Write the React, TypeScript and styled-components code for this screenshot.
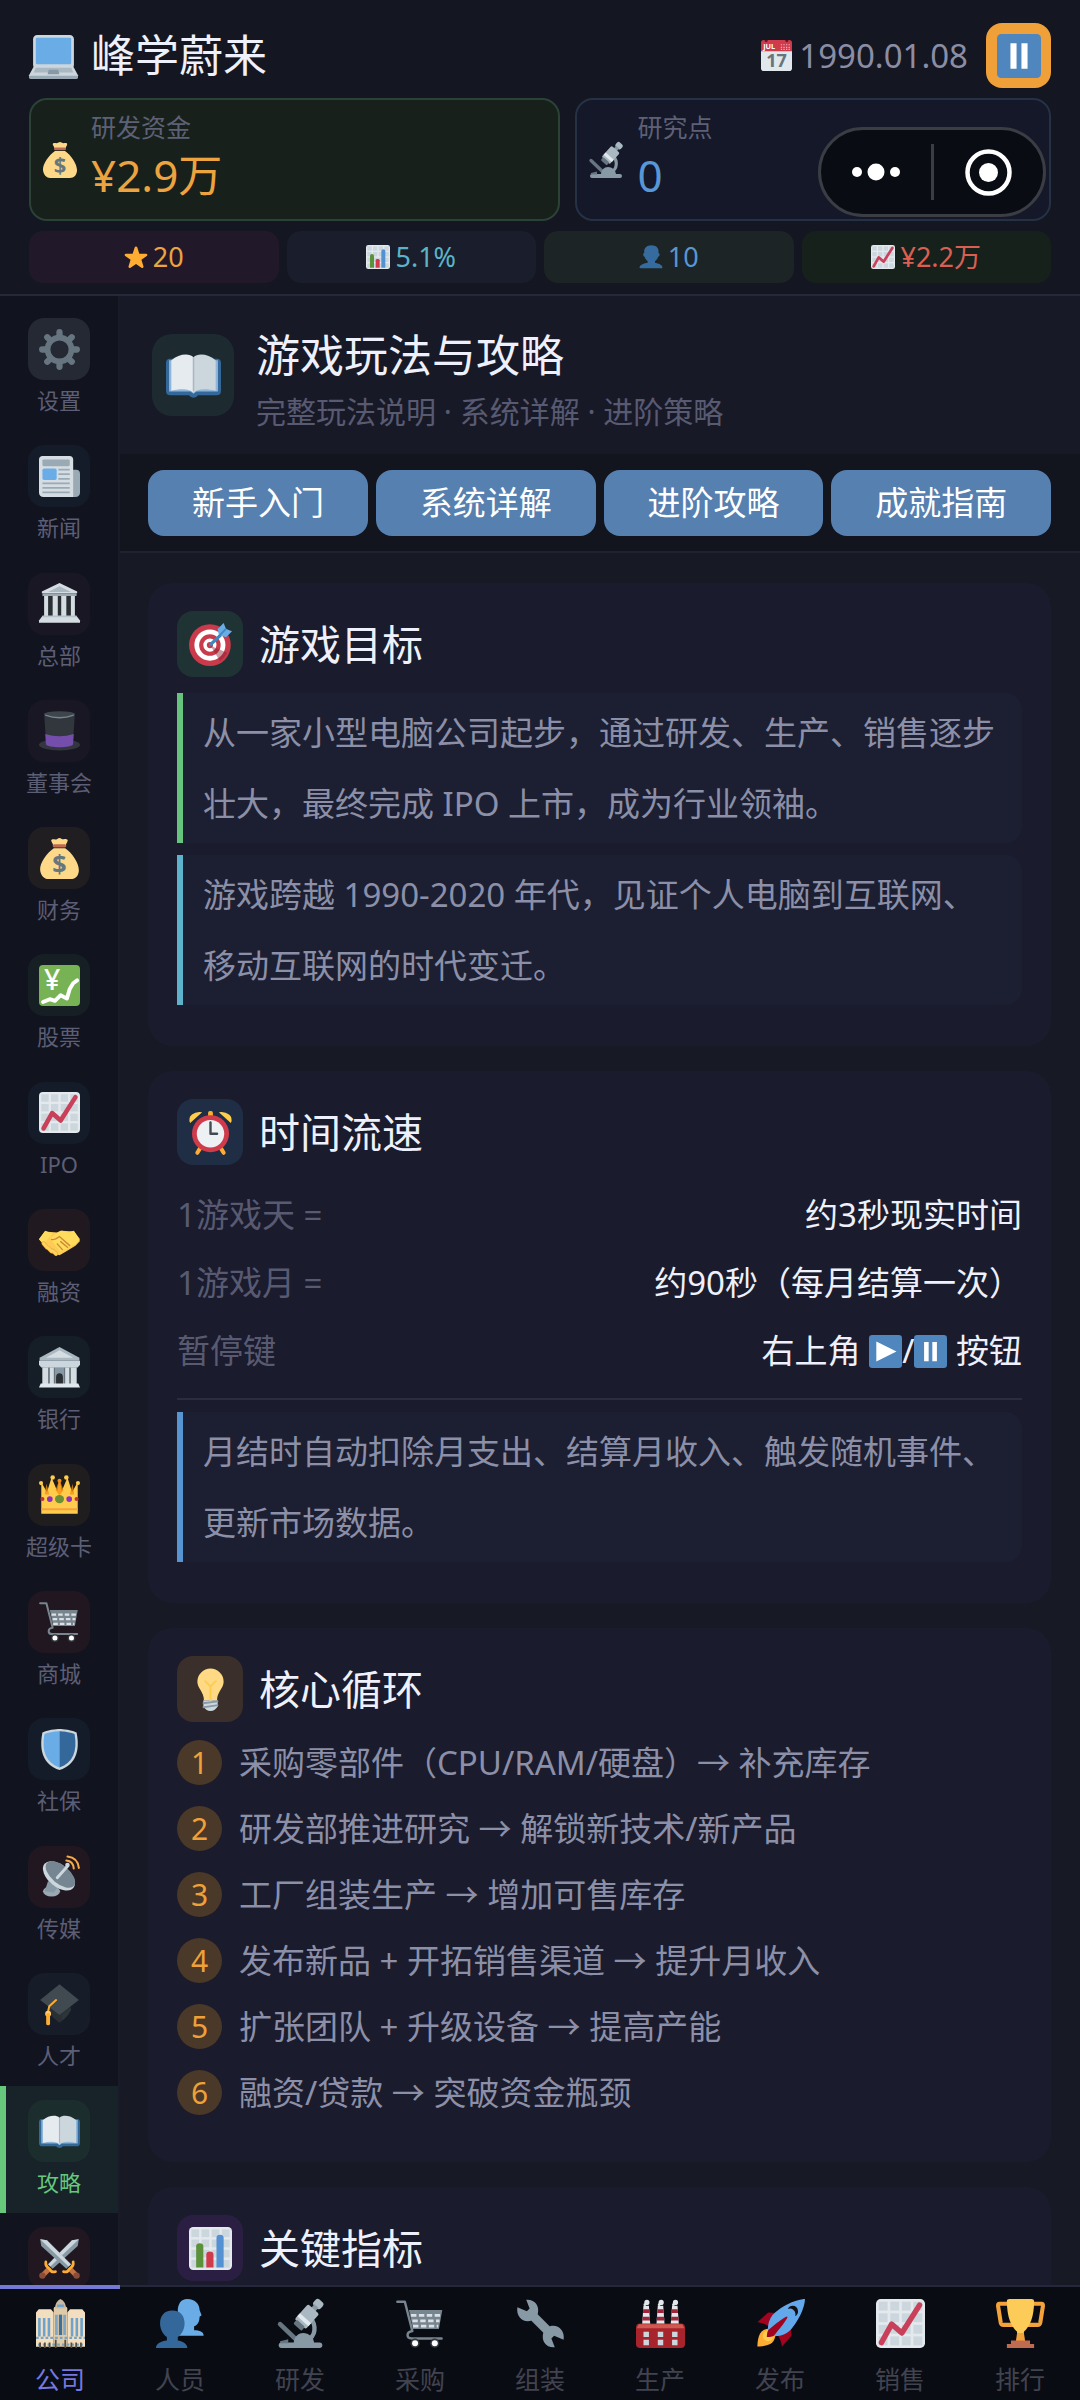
import React from 'react';
import styled, { createGlobalStyle } from 'styled-components';

const GlobalStyle = createGlobalStyle`
  *, *::before, *::after { box-sizing: border-box; }
  body { margin: 0; background: #151722; }
  body, button {
    font-family: "Noto Sans", "Noto Sans CJK SC", sans-serif;
    font-weight: 400;
  }
  button { border: 0; padding: 0; margin: 0; background: none; cursor: pointer; }
  h1, h2, h3, p, dl, dd, ol { margin: 0; padding: 0; font-weight: 400; }
`;

/* ---------- icons ---------- */

const GRID = [2, 10.5, 19, 27.5];

const ChartPaper = () => (
  <>
    <rect width="36" height="36" rx="3.5" fill="#e4e9ee" />
    {GRID.map((x) => GRID.map((y) => <rect key={`${x}-${y}`} x={x} y={y} width="6.5" height="6.5" fill="#ccd6dd" />))}
  </>
);

const Sword = () => (
  <>
    <path d="M1 1l6 1 21 21-4 4L2 7z" fill="#8899a6" />
    <path d="M1 1l6 1 21 21-2 2L1 1z" fill="#ccd6dd" />
    <path d="M27 27l5 5" stroke="#be7245" strokeWidth="4.5" />
    <circle cx="33" cy="33" r="2.8" fill="#8a4b38" />
    <path d="M20 28.500q3.500 1 4.500-1.500l2.500-2.500q2-1 1.500-4.500" transform="translate(1.500 1)" fill="none" stroke="#ffac33" strokeWidth="2.400" strokeLinecap="round" />
  </>
);

const Smoke = ({ x }: { x: number }) => (
  <>
    <path d={`M${x} 5h4l1 14h-6z`} fill="#e6e7e8" />
    <path d={`M${x - 0.2} 7.500h4.400l.2 2.800h-4.800zM${x - 0.6} 13h5.200l.2 2.800h-5.600z`} fill="#a0243a" />
    <circle cx={x + 2.500} cy="2.500" r="1.900" fill="#e1e8ed" />
    <circle cx={x + 1} cy="4.200" r="1" fill="#e1e8ed" />
  </>
);

const ART: Record<string, React.ReactNode> = {
  laptop: (
    <>
      <path d="M33 25c0 1.700-1.300 3-3 3H6c-1.700 0-3-1.300-3-3V6c0-1.700 1.300-3 3-3h24c1.700 0 3 1.300 3 3z" fill="#ccd6dd" />
      <rect x="5" y="5" width="26" height="19.500" rx="1" fill="#6aace6" />
      <path d="M3.500 26h29L36 32.500v1.300c0 .8-.5 1.200-1.200 1.200H1.200C.5 35 0 34.600 0 33.800v-1.300z" fill="#ccd6dd" />
      <path d="M0 32.800h36v1c0 .8-.5 1.200-1.200 1.200H1.200C.5 35 0 34.600 0 33.800z" fill="#99aab5" />
      <path d="M5 27h26l1.500 3.500h-29z" fill="#aab8c2" />
      <path d="M14.500 28.500h7l.8 3.300h-8.600z" fill="#8899a6" />
    </>
  ),
  money: (
    <>
      <path d="M23 9h-10C7 13 .5 22 1 28c.4 5 4 8 7 8h20c4 0 7-3 7-8C35 22 29 13 23 9z" fill="#fdd888" />
      <path d="M11 1.500C13 .3 14 2 16 .8c1.500-1 2.500-1 4 0 2 1 3.500-.6 5 .7.800 1-.8 2.500-1.500 5h-11C12 4 10 2.500 11 1.500z" fill="#fdd888" />
      <rect x="12" y="5.500" width="12" height="2.800" rx="1.400" fill="#bf6952" />
      <text x="18" y="30.500" fontSize="22" fontWeight="700" textAnchor="middle" fill="#67757f">$</text>
    </>
  ),
  microscope: (
    <>
      <path d="M24 14c5 2 6 11 1 15" fill="none" stroke="#8899a6" strokeWidth="3.200" />
      <path d="M3 18.500L14 29" stroke="#66757f" strokeWidth="3.400" strokeLinecap="round" />
      <path d="M13 33c0-5 3-8 7-8s8 3 8 8z" fill="#8899a6" />
      <rect x="2" y="32" width="32" height="4" rx="2" fill="#8899a6" />
      <path d="M3 31l6-1.500v3H3z" fill="#66757f" />
      <g transform="rotate(42 22 13)">
        <rect x="19" y="-3" width="7" height="6" rx="2" fill="#aab8c2" />
        <rect x="20.500" y="2" width="4" height="4" fill="#8899a6" />
        <rect x="17" y="5" width="11" height="15" rx="1.500" fill="#aab8c2" />
        <rect x="17" y="14" width="11" height="3" fill="#e1e8ed" />
        <rect x="18.500" y="19" width="8" height="4" rx="1" fill="#66757f" />
      </g>
    </>
  ),
  star: (
    <path fill="#ffac33" d="M27.287 34.627c-.404 0-.806-.124-1.152-.371L18 28.422l-8.135 5.834a1.970 1.970 0 0 1-2.312-.008 1.971 1.971 0 0 1-.721-2.194l3.034-9.792-8.062-5.681a1.980 1.980 0 0 1-.708-2.203 1.978 1.978 0 0 1 1.866-1.363L12.947 13l3.179-9.549a1.976 1.976 0 0 1 3.749 0L23 13l10.036.015a1.975 1.975 0 0 1 1.159 3.566l-8.062 5.681 3.034 9.792a1.970 1.970 0 0 1-.72 2.194 1.957 1.957 0 0 1-1.160.379z" />
  ),
  bars: (
    <>
      <ChartPaper />
      <path d="M6 34V16q0-2.500 3-2.500t3 2.500v18z" fill="#5c913b" />
      <path d="M14.500 34V23q0-2.500 3-2.500t3 2.500v11z" fill="#cf3b4b" />
      <path d="M23 34V9q0-2.500 3-2.500T29 9v25z" fill="#5391d2" />
    </>
  ),
  person: (
    <path fill="#356b9f" d="M24 26.799v-2.566c2-1.348 4.080-3.779 4.703-6.896.186.103.206.170.413.170.991 0 1.709-1.287 1.709-2.873 0-1.562-.823-2.827-1.794-2.865.187-.674.293-1.577.293-2.735C29.324 5.168 26 .527 18.541.527c-6.629 0-10.777 4.641-10.777 8.507 0 1.123.069 2.043.188 2.755-.911.137-1.629 1.352-1.629 2.845 0 1.587.804 2.873 1.796 2.873.206 0 .025-.067.209-.170C8.952 20.453 11 22.885 13 24.232v2.414c-5 .645-12 3.437-12 6.230v1.061C1 35 2.076 35 3.137 35h29.725C33.924 35 35 35 35 33.938v-1.061c0-2.615-6-5.225-11-6.078z" />
  ),
  trend: (
    <>
      <ChartPaper />
      <path d="M4 32l7.500-13.500 7.500 6.500L32 4.500" fill="none" stroke="#c9405a" strokeWidth="4" strokeLinecap="round" strokeLinejoin="round" />
    </>
  ),
  calendar: (
    <>
      <path d="M0 9h36v24c0 1.700-1.300 3-3 3H3c-1.700 0-3-1.300-3-3z" fill="#e1e8ed" />
      <path d="M3 0h30c1.700 0 3 1.300 3 3v10H0V3c0-1.700 1.300-3 3-3z" fill="#cf3b4b" />
      <path d="M4 0h4q0 2.500-2 2.500T4 0zM28 0h4q0 2.500-2 2.500T28 0z" fill="#66152b" />
      <text x="9.500" y="10.500" fontSize="8.500" fontWeight="700" textAnchor="middle" fill="#fff">JUL</text>
      <path d="M23 5.500h12M23 8.500h12M23 11h12" stroke="#f4abba" strokeWidth="1.400" strokeDasharray="1.500 1.500" />
      <text x="18" y="31.500" fontSize="21" fontWeight="700" textAnchor="middle" fill="#66757f">17</text>
    </>
  ),
  pause: (
    <>
      <rect width="36" height="36" rx="3.500" fill="#4f86be" />
      <path d="M11 7.500h5v21h-5zM20 7.500h5v21h-5z" fill="#fff" />
    </>
  ),
  play: (
    <>
      <rect width="36" height="36" rx="3.500" fill="#4f86be" />
      <path d="M8 7l22 11L8 29z" fill="#fff" />
    </>
  ),
  gear: (
    <g stroke="#66757f" fill="none">
      <circle cx="18" cy="18" r="10.500" strokeWidth="5" />
      {[0, 45, 90, 135, 180, 225, 270, 315].map((a) => (
        <path key={a} d="M18 7V2.800" strokeWidth="5.500" strokeLinecap="round" transform={`rotate(${a} 18 18)`} />
      ))}
    </g>
  ),
  news: (
    <>
      <path d="M28 12h4.500q3.500 0 3.500 3.500V32c0 2.500-1.500 4-4 4h-6z" fill="#99aab5" />
      <path d="M3 0h24c1.700 0 3 1.300 3 3v33H4c-2.500 0-4-1.500-4-4V3c0-1.700 1.300-3 3-3z" fill="#d5dde3" />
      <rect x="3" y="3" width="24" height="6" rx="1" fill="#99aab5" />
      <rect x="3" y="11" width="12.500" height="10" rx="1.500" fill="#6aace6" />
      <path d="M17 12h10M17 16h10M17 20h10M3 24h24M3 28h24M3 32h24" stroke="#99aab5" strokeWidth="1.500" />
    </>
  ),
  temple: (
    <>
      <path d="M4.500 10h27v20h-27z" fill="#292f33" />
      <path d="M4.500 11H8v19H4.500zM12 11h4.500v19H12zM19.500 11H24v19h-4.500zM28 11h3.500v19H28z" fill="#d5dde3" />
      <path d="M18 0l15.500 7.500V9H2.500V7.500z" fill="#d5dde3" />
      <path d="M18 2.800L28 8H8z" fill="#aab8c2" />
      <path d="M3 9h30v2.500H3z" fill="#99aab5" />
      <path d="M3 29h30l3 4v2H0v-2z" fill="#d5dde3" />
      <path d="M3 28.500h30V30H3z" fill="#b7c3cc" />
    </>
  ),
  hat: (
    <>
      <ellipse cx="18" cy="30.500" rx="18" ry="5" fill="#31373d" />
      <path d="M4.500 3h27L29.800 29c0 3-23.600 3-23.600 0z" fill="#31373d" />
      <path d="M5.500 21q12.500 4 25 0l-.6 9c-1 3.500-23 3.500-23.800 0z" fill="#744eaa" />
      <ellipse cx="18" cy="3.800" rx="13.500" ry="2.800" fill="#3e464c" />
      <path d="M5.500 4.500q12.500 4.500 25 0" fill="none" stroke="#758691" strokeWidth="1.300" />
    </>
  ),
  yen: (
    <>
      <rect width="36" height="36" rx="3.500" fill="#77b255" />
      <text x="11.500" y="21.500" fontSize="25" fontWeight="500" textAnchor="middle" fill="#fff">¥</text>
      <path d="M3.500 32.500l6-2.500 4.500 1.500 5-5 5.500 3L27 21l3-5 3.500-2.500" fill="none" stroke="#fff" strokeWidth="3.400" strokeLinejoin="round" strokeLinecap="round" />
    </>
  ),
  hands: (
    <>
      <path d="M5 10l11 1 4-1.500L31 10l5 8.500-4 4L23 28l-5 3-6-1.500L2.500 20 0 17z" fill="#ffcb54" />
      <path d="M0 17l5.500-7.500L12 12l-8 9zM36 17l-5.500-7.500L25 11l6.500 10z" fill="#ffdc5d" />
      <path d="M10 16c3-2 6-5.500 9-6.500 2 0 4 .5 6 1.500l8 9c-1 2-3 2-4 1.500 0 2-2 3-3.500 2 0 2-2.500 3-4 2-.5 2-3 2-4 1" fill="#ffdc5d" />
      <path d="M11 17c2 1 5-1 7-2.500l9 8M19 19l6 5M16 21l4.500 5" fill="none" stroke="#cc8a35" strokeWidth="1.200" strokeLinecap="round" />
      <path d="M4 20.500l3 3.500M8 24.500l3 3M12 27l3 2.800" stroke="#e8a33b" strokeWidth="3.600" strokeLinecap="round" />
      <path d="M4 20.500l3 3.500M8 24.500l3 3M12 27l3 2.800" stroke="#ffd35c" strokeWidth="2.600" strokeLinecap="round" />
    </>
  ),
  bank: (
    <>
      <path d="M3 17h30v16H3z" fill="#66757f" />
      <path d="M3 18h5v15H3zM9.500 18H13v15H9.500zM23 18h3.500v15H23zM28 18h5v15h-5z" fill="#d5dde3" />
      <path d="M14 18h8v15h-8z" fill="#8899a6" />
      <path d="M15 33v-6.500q0-3.500 3-3.500t3 3.500V33z" fill="#292f33" />
      <path d="M18 0l17.500 9.500V12H.5V9.500z" fill="#aab8c2" />
      <path d="M18 2.800L30 9.500H6z" fill="#d5dde3" />
      <path d="M0 12h36v3.500l-2 2.500H2l-2-2.500z" fill="#ccd6dd" />
      <path d="M1.500 32h33l1.500 3.500H0z" fill="#e1e8ed" />
    </>
  ),
  crown: (
    <>
      <path d="M2 35V7l5 9 4-13 5 12 2-11 2 11 5-12 4 13 5-9v28z" fill="#ffcc4d" />
      <path d="M6.500 8.500L9 18H5zM18 5l3.500 9-3.500 5-3.500-5zM29.500 8.500L31 18h-4z" fill="#f4900c" opacity=".75" />
      <g fill="#ffcc4d">
        <circle cx="1.800" cy="8" r="1.800" />
        <circle cx="12" cy="3" r="2" />
        <circle cx="24" cy="3" r="2" />
        <circle cx="34.200" cy="8" r="1.800" />
      </g>
      <circle cx="18" cy="6" r="1.800" fill="#f4900c" />
      <path d="M2 30h32v1.800H2z" fill="#f4a33b" />
      <ellipse cx="18" cy="22" rx="4" ry="3.600" fill="#6f8f35" />
      <g fill="#8f2fc0">
        <circle cx="9.500" cy="22" r="2.500" />
        <circle cx="26.500" cy="22" r="2.500" />
      </g>
      <g fill="#be3333">
        <circle cx="3" cy="22" r="1.800" />
        <circle cx="33" cy="22" r="1.800" />
      </g>
    </>
  ),
  cart: (
    <>
      <path d="M9.500 8h24.500l-2.500 14h-19z" fill="#78848e" />
      <path d="M11 12h21.500M12 16h20M12.500 20h18.500" stroke="#d9e1e6" strokeWidth="2" strokeDasharray="4 1.800" />
      <path d="M1 2h5.500L12 23.500q-3.500.5-3.500 3t3 2.500H33.500" fill="none" stroke="#78848e" strokeWidth="1.800" strokeLinecap="round" strokeLinejoin="round" />
      <circle cx="14" cy="32.500" r="3.400" fill="#31373d" />
      <circle cx="28.500" cy="32.500" r="3.400" fill="#31373d" />
      <circle cx="14" cy="32.500" r="2.200" fill="#fff" />
      <circle cx="28.500" cy="32.500" r="2.200" fill="#fff" />
    </>
  ),
  shield: (
    <>
      <path d="M33 3c-7-3-15-3-15-3S10 0 3 3C0 18 3 31 18 36c15-5 18-18 15-33z" fill="#ccd6dd" />
      <path d="M18 33.900C6.400 29.700 2 19.800 4.800 4.400 11 2 18 2 18 2z" fill="#6aace6" />
      <path d="M18 33.900C29.600 29.700 34 19.800 31.200 4.400 25 2 18 2 18 2z" fill="#34689b" />
    </>
  ),
  dish: (
    <>
      <ellipse cx="11" cy="31" rx="7.500" ry="4.500" fill="#99aab5" />
      <path d="M8 22l8 6-3 4-8-1z" fill="#8899a6" />
      <ellipse cx="17.500" cy="17.500" rx="16.500" ry="9.500" transform="rotate(40 17.500 17.500)" fill="#ccd6dd" />
      <ellipse cx="18.800" cy="16.200" rx="15.500" ry="8" transform="rotate(40 18.800 16.200)" fill="#758591" />
      <path d="M16 19l9-10" stroke="#ccd6dd" strokeWidth="2.600" strokeLinecap="round" />
      <circle cx="25" cy="8" r="2" fill="#ccd6dd" />
      <path d="M24 4q6 .5 6.500 7M25 .5q9 1 10 10" fill="none" stroke="#f4a94a" strokeWidth="1.800" strokeLinecap="round" />
    </>
  ),
  cap: (
    <>
      <path d="M9 18l18-3v9c0 4-5 8-9 11-4-3-9-7-9-11z" fill="#292f33" />
      <path d="M18 1l17 14-17 13L1 15z" fill="#414a50" />
      <path d="M20 28l8-7v3q-3 6-8 9z" fill="#2d343a" />
      <path d="M15 15L9 20.500 8 25" fill="none" stroke="#ffac33" strokeWidth="1.800" strokeLinecap="round" />
      <circle cx="8" cy="27" r="2.600" fill="#ffcc66" />
      <path d="M8 28v7.500" stroke="#ffac33" strokeWidth="3.400" strokeLinecap="round" />
    </>
  ),
  book: (
    <>
      <path d="M0 10q0-3 2.500-3h31Q36 7 36 10v18q0 3-3 3H21q-1 1.500-3 1.500T15 31H3q-3 0-3-3z" fill="#34689b" />
      <path d="M2 8h32v20.500H20L18 30l-2-1.500H2z" fill="#8fb6d8" />
      <path d="M18 29.500C16 26.500 9 26.500 3.500 28V8C8 4 15 3 18 6z" fill="#e6ebef" />
      <path d="M18 29.500c2-3 9-3 14.500-1.500V8C28 4 21 3 18 6z" fill="#ccd6dd" />
      <path d="M18 6v22" stroke="#aab8c2" strokeWidth="1" />
    </>
  ),
  swords: (
    <>
      <g transform="translate(36 0) scale(-1 1)"><Sword /></g>
      <Sword />
    </>
  ),
  dart: (
    <>
      <circle cx="17.500" cy="18.500" r="17.500" fill="#c93a4a" />
      <circle cx="17.500" cy="18.500" r="13" fill="#fff" />
      <circle cx="17.500" cy="18.500" r="9" fill="#c93a4a" />
      <circle cx="17.500" cy="18.500" r="5.500" fill="#fff" />
      <circle cx="17.500" cy="18.500" r="2.600" fill="#c93a4a" />
      <path d="M18 19l8 13q4-3 6-7z" fill="#8a1f33" opacity=".45" />
      <path d="M18 18L31 6" stroke="#3b88c3" strokeWidth="2.600" strokeLinecap="round" />
      <path d="M25 10l-1-5 5-5 2 5 5 2-5 5z" fill="#6aace6" />
      <path d="M25 11l6-6" stroke="#3b88c3" strokeWidth="1.500" />
    </>
  ),
  clock: (
    <>
      <path d="M10 30l-3 5M26 30l3 5" stroke="#ffac33" strokeWidth="3.400" strokeLinecap="round" />
      <rect x="16" y="0" width="4" height="5" rx="1.500" fill="#ffac33" />
      <path d="M1 10q-2-4 1.500-7T11 1zM35 10q2-4-1.500-7T25 1z" fill="#ffcc4d" />
      <circle cx="18" cy="19" r="15.500" fill="#cf3b4b" />
      <circle cx="18" cy="19" r="11.500" fill="#eef1f4" />
      <path d="M18 9.500V19h5.500" fill="none" stroke="#414a50" strokeWidth="2" strokeLinecap="round" strokeLinejoin="round" />
    </>
  ),
  bulb: (
    <>
      <path d="M29 11.500C29 17 23.500 20 23.500 27h-11C12.500 20 7 17 7 11.500a11 11 0 0 1 22 0z" fill="#ffd983" />
      <path d="M13.500 11l4.500 4.500 4.500-4.500M18 15.500V27" fill="none" stroke="#ffcc4d" strokeWidth="1.600" strokeLinecap="round" strokeLinejoin="round" />
      <path d="M12 27h12v5q-2 4-6 4t-6-4z" fill="#ccd6dd" />
      <path d="M11.500 29.500l13-1.500M11.500 33l13-2" stroke="#8899a6" strokeWidth="1.500" />
    </>
  ),
  office: (
    <>
      <path d="M0 10l2-2.500h9l2 2.500v25H0zM23 10l2-2.500h9l2 2.500v25H23z" fill="#f3dfc0" />
      <path d="M13 7q0-2 5-2t5 2v28H13z" fill="#e0cba9" />
      <path d="M14 7q0-5 4-7 4 2 4 7z" fill="#c9b9a0" />
      <path d="M15.500 5h5M2.500 14v13.500M6 14v13.500M9.500 14v13.500M26.500 14v13.500M30 14v13.500M33.500 14v13.500" stroke="#6fa3cd" strokeWidth="1.900" />
      <path d="M15 11.500v15M21 11.500v15" stroke="#7fa6c4" strokeWidth="2" />
      <path d="M18 11.500v15" stroke="#3f6f9d" strokeWidth="2.400" />
      <path d="M0 28.500h36M1.500 33.500h33" stroke="#7da2bd" strokeWidth="1.600" strokeDasharray="2 1.500" />
      <path d="M3 36v-4M6.500 36v-4M10 36v-4M14.500 36v-6M21.500 36v-6M26 36v-4M29.500 36v-4M33 36v-4" stroke="#54503f" strokeWidth="1.300" />
    </>
  ),
  people: (
    <>
      <path d="M23 0c6 0 9 4 9 8l1.500 4-1.500 1c0 3-1 6-4 7v3c4 0 7 1 7 4H16V9c0-5 2-9 7-9z" fill="#6aace6" />
      <path d="M12 8.500c6 0 9 4 9 9.500 0 4-2 8-5 10v2.500c3 .5 7 2 7 5.500H0c0-3.500 4-5 8-5.500V28c-3-2-5-6-5-10 0-5.500 3-9.500 9-9.500z" fill="#34689b" />
    </>
  ),
  wrench: (
    <>
      <path d="M9 9l18 18" stroke="#8899a6" strokeWidth="6.500" />
      <path d="M1 6l7 3 2-2-2.500-6.500C14 0 17.500 5 16 11l-5 5C5 17.500 0 13 1 6zM35 30l-7-3-2 2 2.500 6.500C22 36 18.500 31 20 25l5-5c6-1.500 11 3 10 10z" fill="#8899a6" />
    </>
  ),
  factory: (
    <>
      <Smoke x={5.500} />
      <Smoke x={16} />
      <Smoke x={26.500} />
      <path d="M3 18h30q3 0 3 3v12q0 3-3 3H3q-3 0-3-3V21q0-3 3-3z" fill="#a8242c" />
      <path d="M2 18.500h32l1.500 3H.5z" fill="#cf5a50" />
      <path d="M5.500 24h4v4h-4zM16 24h4v4h-4zM26.500 24h4v4h-4zM5.500 30h4v4h-4zM16 30h4v4h-4zM26.500 30h4v4h-4z" fill="#ccd6dd" />
    </>
  ),
  rocket: (
    <>
      <path d="M1 17l8-7 16 1 1 16-7 8s0-6-6-12-12-6-12-6z" fill="#a0041e" />
      <path d="M1 35s0-8 3-11 11-2.800 11-2.800S15 29 12 32c-3 3-11 3-11 3z" fill="#ffac33" />
      <circle cx="9" cy="27" r="4" fill="#ffcc4d" />
      <path d="M36 0S26 0 14 10c-6 5-6 14-4 16s11 2 16-4C36 10 36 0 36 0z" fill="#62a8ea" />
      <path d="M27 5a4 4 0 0 0-3.600 2.400A4 4 0 0 1 29 11c0 .6-.1 1.100-.4 1.600A4 4 0 0 0 27 5z" fill="#111" />
      <path d="M8 28s0-4 1-5 13-11 14-10-9 13-10 14-5 1-5 1z" fill="#a0041e" />
    </>
  ),
  trophy: (
    <>
      <path d="M8.500 3.500H2.500q-1 0-1 1.500l2 12.500q.3 1.500 2 1.500h7M27.500 3.500h6q1 0 1 1.500l-2 12.500q-.3 1.500-2 1.500h-7" fill="none" stroke="#f4a33b" strokeWidth="3" strokeLinejoin="round" />
      <path d="M8 1.500Q8 0 10 0h16q2 0 2 1.500C28 13 25 20 20.500 24v7h-5v-7C11 20 8 13 8 1.500z" fill="#fdcb58" />
      <path d="M15.500 25h5l1 6.500h-7z" fill="#f4a33b" />
      <path d="M11 30.500h14v2.500h3v3H8v-3h3z" fill="#be6b4f" />
    </>
  ),
};

const Svg = styled.svg<{ $size: number }>`
  display: block;
  flex: none;
  width: ${(p) => p.$size}px;
  height: ${(p) => p.$size}px;
  overflow: visible;
`;

const Icon = ({ name, size }: { name: string; size: number }) => (
  <Svg viewBox="0 0 36 36" $size={size} aria-hidden="true">{ART[name]}</Svg>
);

/* ---------- shell ---------- */

const Shell = styled.div`
  position: relative;
  display: flex;
  flex-direction: column;
  height: 100vh;
  overflow: hidden;
  background: #171924;
  color: #eef0fb;
`;

const Header = styled.header`
  display: flex;
  flex-direction: column;
  gap: 10px;
  padding: 23px 29px 11px;
  background: #141621;
  border-bottom: 2px solid #25273a;
`;

const TitleRow = styled.div`
  display: flex;
  align-items: center;
  gap: 13px;
  height: 65px;
`;

const Brand = styled.h1`
  flex: 1;
  padding-bottom: 2px;
  font-size: 44px;
  line-height: 60px;
`;

const DateLabel = styled.span`
  display: flex;
  align-items: center;
  gap: 7px;
  margin-right: 5px;
  font-size: 33px;
  line-height: 44px;
  color: #8b8da5;
`;

const PauseButton = styled.button`
  display: grid;
  place-items: center;
  width: 65px;
  height: 65px;
  border-radius: 16px;
  background: #f0a038;
`;

const Funds = styled.div`
  display: grid;
  grid-template-columns: 19fr 17fr;
  gap: 15px;
`;

const FundCard = styled.section<{ $bg: string; $line: string }>`
  display: flex;
  align-items: center;
  gap: 13px;
  height: 123px;
  padding: 0 11px;
  border: 2px solid ${(p) => p.$line};
  border-radius: 18px;
  background: ${(p) => p.$bg};
`;

const FundText = styled.div`
  padding-bottom: 4px;
`;

const FundLabel = styled.p`
  font-size: 25px;
  line-height: 35px;
  color: #5e6076;
`;

const FundValue = styled.p<{ $color: string }>`
  font-size: 44px;
  line-height: 60px;
  color: ${(p) => p.$color};
`;

const Chips = styled.div`
  display: grid;
  grid-template-columns: repeat(4, 1fr);
  gap: 8px;
`;

const Chip = styled.div<{ $bg: string; $color: string }>`
  display: flex;
  align-items: center;
  justify-content: center;
  gap: 5px;
  height: 52px;
  border-radius: 14px;
  background: ${(p) => p.$bg};
  color: ${(p) => p.$color};
  font-size: 27px;
  line-height: 36px;
`;

/* floating mini-program capsule */
const Capsule = styled.div`
  position: absolute;
  top: 127px;
  right: 34px;
  display: flex;
  align-items: center;
  width: 228px;
  height: 90px;
  border: 3px solid #3b3d44;
  border-radius: 45px;
  background: #0a0c14;
`;

const CapsuleButton = styled.button`
  flex: 1;
  display: grid;
  place-items: center;
  height: 100%;
`;

const CapsuleRule = styled.span`
  width: 3px;
  height: 56px;
  background: #3b3d44;
`;

const Body = styled.div`
  flex: 1;
  min-height: 0;
  display: flex;
`;

/* ---------- side menu ---------- */

const Side = styled.nav`
  flex: none;
  width: 120px;
  padding-top: 8px;
  overflow-y: auto;
  scrollbar-width: none;
  background: #11131e;
  border-right: 2px solid #191b28;
`;

const SideItem = styled.button<{ $active?: boolean }>`
  display: flex;
  flex-direction: column;
  align-items: center;
  gap: 8px;
  width: 100%;
  padding: 14px 0 18px;
  font-size: 22px;
  line-height: 1.15;
  color: ${(p) => (p.$active ? '#66c87d' : '#5c5e75')};
  background: ${(p) => (p.$active ? '#172329' : 'transparent')};
  box-shadow: ${(p) => (p.$active ? 'inset 6px 0 0 #66c87d' : 'none')};
`;

const SideTile = styled.span<{ $bg: string }>`
  display: grid;
  place-items: center;
  width: 62px;
  height: 62px;
  border-radius: 16px;
  background: ${(p) => p.$bg};
`;

/* ---------- main column ---------- */

const Main = styled.main`
  flex: 1;
  min-width: 0;
  overflow-y: auto;
  scrollbar-width: none;
`;

const Intro = styled.div`
  display: flex;
  align-items: center;
  gap: 22px;
  height: 158px;
  padding: 0 32px;
  background: #171927;
`;

const IntroTile = styled.span`
  display: grid;
  place-items: center;
  width: 82px;
  height: 82px;
  border-radius: 20px;
  background: #1d2b30;
`;

const IntroText = styled.div`
  padding-top: 10px;
`;

const IntroTitle = styled.h2`
  font-size: 44px;
  line-height: 64px;
`;

const IntroSub = styled.p`
  font-size: 30px;
  line-height: 50px;
  color: #585a72;
`;

const Tabs = styled.div`
  display: grid;
  grid-template-columns: repeat(4, 1fr);
  gap: 8px;
  padding: 16px 29px 15px 28px;
  background: #12141e;
  border-bottom: 2px solid #20222f;
`;

const Tab = styled.button`
  height: 66px;
  border-radius: 16px;
  background: #5680b0;
  color: #fff;
  font-size: 33px;
  line-height: 44px;
`;

const Cards = styled.div`
  display: flex;
  flex-direction: column;
  gap: 25px;
  padding: 30px 29px 30px 28px;
`;

const Card = styled.section`
  padding: 28px 29px 29px;
  border-radius: 24px;
  background: #1a1b2c;
`;

const CardHead = styled.div`
  display: flex;
  align-items: center;
  gap: 16px;
  margin-bottom: 16px;
`;

const CardTile = styled.span<{ $bg: string }>`
  display: grid;
  place-items: center;
  width: 66px;
  height: 66px;
  border-radius: 16px;
  background: ${(p) => p.$bg};
`;

const CardTitle = styled.h3`
  font-size: 41px;
  line-height: 60px;
`;

const Note = styled.p<{ $color: string }>`
  margin-bottom: 12px;
  padding: 4px 20px;
  border-left: 6px solid ${(p) => p.$color};
  border-radius: 0 16px 16px 0;
  background: #1c1f31;
  font-size: 33px;
  line-height: 71px;
  color: #8c8fa8;
`;

const Facts = styled.dl`
  padding-bottom: 13px;
  margin-bottom: 12px;
  border-bottom: 2px solid #2b2c3e;
`;

const Fact = styled.div`
  display: flex;
  justify-content: space-between;
  font-size: 33px;
  line-height: 68px;

  dt { color: #585a72; }
  dd { display: flex; align-items: center; white-space: pre; }
`;

const Steps = styled.ol`
  display: flex;
  flex-direction: column;
  gap: 17px;
  padding-bottom: 16px;
  list-style: none;
`;

const Step = styled.li`
  display: flex;
  align-items: center;
  gap: 17px;
  font-size: 33px;
  line-height: 49px;
  color: #8c8fa8;
`;

const StepNumber = styled.span`
  display: grid;
  place-items: center;
  width: 45px;
  height: 45px;
  border-radius: 50%;
  background: #4a3828;
  color: #f0a038;
  font-size: 30px;
  line-height: 45px;
`;

/* ---------- bottom bar ---------- */

const Bottom = styled.nav`
  display: grid;
  grid-template-columns: repeat(9, 1fr);
  background: #0a0c14;
`;

const BottomItem = styled.button<{ $active?: boolean }>`
  display: flex;
  flex-direction: column;
  align-items: center;
  gap: 11px;
  height: 115px;
  padding-top: 14px;
  font-size: 25px;
  line-height: 40px;
  color: ${(p) => (p.$active ? '#7478e0' : '#41434f')};
  box-shadow: ${(p) => (p.$active ? 'inset 0 4px 0 #7478d6' : 'inset 0 2px 0 #25273a')};
`;

/* ---------- data ---------- */

const SIDE = [
  ['gear', '设置', '#252933'],
  ['news', '新闻', '#151c29'],
  ['temple', '总部', '#1a1725'],
  ['hat', '董事会', '#1a1725'],
  ['money', '财务', '#201e20'],
  ['yen', '股票', '#162024'],
  ['trend', 'IPO', '#151c29'],
  ['hands', '融资', '#201a20'],
  ['bank', '银行', '#151e26'],
  ['crown', '超级卡', '#201d1f'],
  ['cart', '商城', '#201721'],
  ['shield', '社保', '#151c29'],
  ['dish', '传媒', '#201721'],
  ['cap', '人才', '#161d29'],
  ['book', '攻略', '#1b2e2d'],
  ['swords', '', '#201720'],
];

const STEPS = [
  '采购零部件（CPU/RAM/硬盘）→ 补充库存',
  '研发部推进研究 → 解锁新技术/新产品',
  '工厂组装生产 → 增加可售库存',
  '发布新品 + 开拓销售渠道 → 提升月收入',
  '扩张团队 + 升级设备 → 提高产能',
  '融资/贷款 → 突破资金瓶颈',
];

const BOTTOM = [
  ['office', '公司'],
  ['people', '人员'],
  ['microscope', '研发'],
  ['cart', '采购'],
  ['wrench', '组装'],
  ['factory', '生产'],
  ['rocket', '发布'],
  ['trend', '销售'],
  ['trophy', '排行'],
];

const Heading = ({ icon, bg, children }: { icon: string; bg: string; children: React.ReactNode }) => (
  <CardHead>
    <CardTile $bg={bg}><Icon name={icon} size={43} /></CardTile>
    <CardTitle>{children}</CardTitle>
  </CardHead>
);

export default function App() {
  return (
    <Shell>
      <GlobalStyle />
      <Header>
        <TitleRow>
          <Icon name="laptop" size={49} />
          <Brand>峰学蔚来</Brand>
          <DateLabel><Icon name="calendar" size={31} />1990.01.08</DateLabel>
          <PauseButton aria-label="暂停"><Icon name="pause" size={44} /></PauseButton>
        </TitleRow>
        <Funds>
          <FundCard $bg="#17201b" $line="#2b4236">
            <Icon name="money" size={36} />
            <FundText>
              <FundLabel>研发资金</FundLabel>
              <FundValue $color="#eda33f">¥2.9万</FundValue>
            </FundText>
          </FundCard>
          <FundCard $bg="#141828" $line="#253246">
            <Icon name="microscope" size={36} />
            <FundText>
              <FundLabel>研究点</FundLabel>
              <FundValue $color="#5896d4">0</FundValue>
            </FundText>
          </FundCard>
        </Funds>
        <Chips>
          <Chip $bg="#21192a" $color="#eda33f"><Icon name="star" size={24} />20</Chip>
          <Chip $bg="#1a1d2b" $color="#5cb3c8"><Icon name="bars" size={24} />5.1%</Chip>
          <Chip $bg="#1c2425" $color="#5896d4"><Icon name="person" size={24} />10</Chip>
          <Chip $bg="#17211c" $color="#d95f52"><Icon name="trend" size={24} />¥2.2万</Chip>
        </Chips>
      </Header>

      <Body>
        <Side aria-label="功能">
          {SIDE.map(([icon, label, bg]) => (
            <SideItem key={icon} $active={label === '攻略'} aria-label={label || '对战'}>
              <SideTile $bg={bg}><Icon name={icon} size={41} /></SideTile>
              {label}
            </SideItem>
          ))}
        </Side>

        <Main>
          <Intro>
            <IntroTile><Icon name="book" size={55} /></IntroTile>
            <IntroText>
              <IntroTitle>游戏玩法与攻略</IntroTitle>
              <IntroSub>完整玩法说明 · 系统详解 · 进阶策略</IntroSub>
            </IntroText>
          </Intro>
          <Tabs>
            <Tab>新手入门</Tab>
            <Tab>系统详解</Tab>
            <Tab>进阶攻略</Tab>
            <Tab>成就指南</Tab>
          </Tabs>
          <Cards>
            <Card>
              <Heading icon="dart" bg="#203334">游戏目标</Heading>
              <Note $color="#66c47e">从一家小型电脑公司起步，通过研发、生产、销售逐步壮大，最终完成 IPO 上市，成为行业领袖。</Note>
              <Note $color="#5cb3cb">游戏跨越 1990-2020 年代，见证个人电脑到互联网、移动互联网的时代变迁。</Note>
            </Card>
            <Card>
              <Heading icon="clock" bg="#1f2e45">时间流速</Heading>
              <Facts>
                <Fact><dt>1游戏天 =</dt><dd>约3秒现实时间</dd></Fact>
                <Fact><dt>1游戏月 =</dt><dd>约90秒（每月结算一次）</dd></Fact>
                <Fact>
                  <dt>暂停键</dt>
                  <dd>右上角 <Icon name="play" size={33} />/<Icon name="pause" size={33} /> 按钮</dd>
                </Fact>
              </Facts>
              <Note $color="#5694d2">月结时自动扣除月支出、结算月收入、触发随机事件、更新市场数据。</Note>
            </Card>
            <Card>
              <Heading icon="bulb" bg="#3a2f2a">核心循环</Heading>
              <Steps>
                {STEPS.map((text, i) => (
                  <Step key={text}><StepNumber>{i + 1}</StepNumber>{text}</Step>
                ))}
              </Steps>
            </Card>
            <Card>
              <Heading icon="bars" bg="#2a1f42">关键指标</Heading>
            </Card>
          </Cards>
        </Main>
      </Body>

      <Bottom aria-label="主导航">
        {BOTTOM.map(([icon, label], i) => (
          <BottomItem key={label} $active={i === 0}>
            <Icon name={icon} size={49} />
            {label}
          </BottomItem>
        ))}
      </Bottom>

      <Capsule>
        <CapsuleButton aria-label="更多">
          <svg width="48" height="18" viewBox="0 0 48 18" fill="#fff" aria-hidden="true">
            <circle cx="5" cy="9" r="5" />
            <circle cx="24" cy="9" r="8.500" />
            <circle cx="43" cy="9" r="5" />
          </svg>
        </CapsuleButton>
        <CapsuleRule />
        <CapsuleButton aria-label="关闭">
          <svg width="47" height="47" viewBox="0 0 47 47" aria-hidden="true">
            <circle cx="23.500" cy="23.500" r="21" fill="none" stroke="#fff" strokeWidth="4.500" />
            <circle cx="23.500" cy="23.500" r="9.500" fill="#fff" />
          </svg>
        </CapsuleButton>
      </Capsule>
    </Shell>
  );
}
